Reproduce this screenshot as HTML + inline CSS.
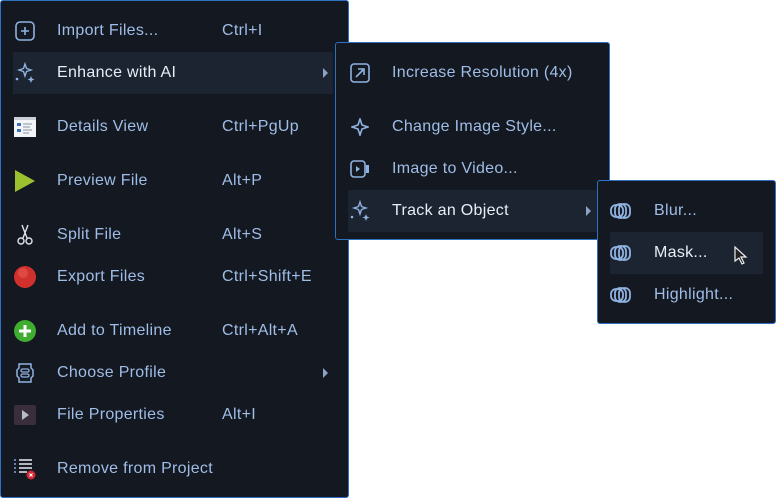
<!DOCTYPE html><html><head><style>
body{margin:0;width:776px;height:498px;background:#fff;position:relative;overflow:hidden;font-family:"Liberation Sans",sans-serif;font-size:16px;letter-spacing:0.3px;color:#9fbde6}
.m{position:absolute;background:#141821;border:1px solid #2f6fc4;border-radius:3px;box-sizing:border-box}
.r{position:absolute;left:0;right:0;height:42px;line-height:42px}
.t{position:absolute;white-space:nowrap}
.hl{background:#1c2432;color:#e8eef6}
.ic{position:absolute;top:50%;transform:translate(-50%,-50%)}
.arr{position:absolute;width:0;height:0;border-left:5px solid #8ca3c4;border-top:5px solid transparent;border-bottom:5px solid transparent;top:16px}
</style></head><body>
<div class="m" style="left:0;top:0;width:349px;height:498px">
 <div class="r" style="top:9px"><svg class="ic" style="left:24px" width="22" height="22" viewBox="0 0 22 22"><rect x="2" y="2" width="18" height="18" rx="4" fill="none" stroke="#8fb2e0" stroke-width="1.6"/><path d="M11 7v8M7 11h8" stroke="#8fb2e0" stroke-width="1.6"/></svg><span class="t" style="left:56px">Import Files...</span><span class="t" style="left:221px">Ctrl+I</span></div>
 <div class="r hl" style="top:51px;left:12px;right:15px"><svg class="ic" style="left:12px" width="22" height="22" viewBox="0 0 22 22"><path d="M11 2l1.5 4.5L17 8l-4.5 1.5L11 14l-1.5-4.5L5 8l4.5-1.5z" fill="none" stroke="#8fb2e0" stroke-width="1.4"/><path d="M17 14l1 2.5 2.5 1-2.5 1-1 2.5-1-2.5-2.5-1 2.5-1z" fill="#8fb2e0"/><circle cx="3" cy="17" r="1.3" fill="#8fb2e0"/></svg><span class="t" style="left:44px">Enhance with AI</span><span class="arr" style="left:310px"></span></div>
 <div class="r" style="top:105px"><svg class="ic" style="left:24px" width="22" height="20" viewBox="0 0 22 20"><rect x="0" y="0" width="22" height="20" fill="#f2f4f8"/><rect x="0" y="0" width="22" height="3" fill="#c9d0da"/><rect x="3" y="6" width="4" height="3" fill="#3d6fc0"/><rect x="3" y="12" width="4" height="3" fill="#3d6fc0"/><path d="M9 7h9M9 10h7M9 13h9M9 16h6" stroke="#8a94a3"/></svg><span class="t" style="left:56px">Details View</span><span class="t" style="left:221px">Ctrl+PgUp</span></div>
 <div class="r" style="top:159px"><svg class="ic" style="left:24px" width="22" height="22" viewBox="0 0 22 22"><path d="M1 0L21 11L1 22z" fill="#9ac22e"/></svg><span class="t" style="left:56px">Preview File</span><span class="t" style="left:221px">Alt+P</span></div>
 <div class="r" style="top:213px"><svg class="ic" style="left:24px" width="18" height="22" viewBox="0 0 18 22"><path d="M6 1l5 13M12 1L7 14" stroke="#dfe3ea" stroke-width="1.4"/><circle cx="5" cy="17" r="3" fill="none" stroke="#dfe3ea" stroke-width="1.4"/><circle cx="13" cy="17" r="3" fill="none" stroke="#dfe3ea" stroke-width="1.4"/></svg><span class="t" style="left:56px">Split File</span><span class="t" style="left:221px">Alt+S</span></div>
 <div class="r" style="top:255px"><svg class="ic" style="left:24px" width="22" height="22" viewBox="0 0 22 22"><circle cx="11" cy="11" r="11" fill="#d0312d"/><circle cx="9" cy="7" r="5" fill="#e85a52" opacity=".6"/></svg><span class="t" style="left:56px">Export Files</span><span class="t" style="left:221px">Ctrl+Shift+E</span></div>
 <div class="r" style="top:309px"><svg class="ic" style="left:24px" width="22" height="22" viewBox="0 0 22 22"><circle cx="11" cy="11" r="11" fill="#3fad2f"/><path d="M11 5v12M5 11h12" stroke="#fff" stroke-width="3"/></svg><span class="t" style="left:56px">Add to Timeline</span><span class="t" style="left:221px">Ctrl+Alt+A</span></div>
 <div class="r" style="top:351px"><svg class="ic" style="left:24px" width="20" height="22" viewBox="0 0 20 22"><path d="M4 2h12v4l2 2v6l-2 2v4H4v-4l-2-2V8l2-2z" fill="none" stroke="#8fb2e0" stroke-width="1.5"/><rect x="6" y="7" width="8" height="3" rx="1.5" fill="none" stroke="#8fb2e0" stroke-width="1.3"/><rect x="6" y="12" width="8" height="3" rx="1.5" fill="none" stroke="#8fb2e0" stroke-width="1.3"/></svg><span class="t" style="left:56px">Choose Profile</span><span class="arr" style="left:322px"></span></div>
 <div class="r" style="top:393px"><svg class="ic" style="left:24px" width="22" height="20" viewBox="0 0 22 20"><rect x="0" y="0" width="22" height="20" rx="2" fill="#3a2e3c"/><path d="M8 5l7 5-7 5z" fill="#b7bcc8"/></svg><span class="t" style="left:56px">File Properties</span><span class="t" style="left:221px">Alt+I</span></div>
 <div class="r" style="top:447px"><svg class="ic" style="left:24px" width="24" height="22" viewBox="0 0 24 22"><path d="M6 2h13M6 6h13M6 10h13M6 14h8" stroke="#e8ecf2" stroke-width="1.5"/><circle cx="2" cy="2" r="1" fill="#7fa6dc"/><circle cx="2" cy="6" r="1" fill="#7fa6dc"/><circle cx="2" cy="10" r="1" fill="#7fa6dc"/><circle cx="2" cy="14" r="1" fill="#7fa6dc"/><circle cx="18" cy="17" r="4.5" fill="#d02a36"/><path d="M16.5 15.5l3 3M19.5 15.5l-3 3" stroke="#fff" stroke-width="1"/></svg><span class="t" style="left:56px">Remove from Project</span></div>
</div>
<div class="m" style="left:335px;top:42px;width:275px;height:198px">
 <div class="r" style="top:9px"><svg class="ic" style="left:24px" width="20" height="20" viewBox="0 0 20 20"><rect x="1" y="1" width="18" height="18" rx="3" fill="none" stroke="#8fb2e0" stroke-width="1.6"/><path d="M6 14l8-8M8 6h6v6" fill="none" stroke="#8fb2e0" stroke-width="1.6"/></svg><span class="t" style="left:56px">Increase Resolution (4x)</span></div>
 <div class="r" style="top:63px"><svg class="ic" style="left:24px" width="18" height="18" viewBox="0 0 18 18"><path d="M9 1l2 6 6 2-6 2-2 6-2-6-6-2 6-2z" fill="none" stroke="#8fb2e0" stroke-width="1.6"/></svg><span class="t" style="left:56px">Change Image Style...</span></div>
 <div class="r" style="top:105px"><svg class="ic" style="left:24px" width="20" height="18" viewBox="0 0 20 18"><rect x="1" y="1" width="14" height="16" rx="3" fill="none" stroke="#8fb2e0" stroke-width="1.6"/><path d="M6 6l4 3-4 3z" fill="#8fb2e0"/><rect x="16" y="5" width="3" height="8" fill="#8fb2e0"/></svg><span class="t" style="left:56px">Image to Video...</span></div>
 <div class="r hl" style="top:147px;left:12px;right:12px"><svg class="ic" style="left:12px" width="22" height="22" viewBox="0 0 22 22"><path d="M11 2l1.5 4.5L17 8l-4.5 1.5L11 14l-1.5-4.5L5 8l4.5-1.5z" fill="none" stroke="#8fb2e0" stroke-width="1.4"/><path d="M17 14l1 2.5 2.5 1-2.5 1-1 2.5-1-2.5-2.5-1 2.5-1z" fill="#8fb2e0"/><circle cx="3" cy="17" r="1.3" fill="#8fb2e0"/></svg><span class="t" style="left:44px">Track an Object</span><span class="arr" style="left:238px"></span></div>
</div>
<div class="m" style="left:597px;top:180px;width:179px;height:144px">
 <div class="r" style="top:9px"><svg class="ic" style="left:23px" width="22" height="16" viewBox="0 0 22 16"><rect x="1" y="2" width="12" height="12" rx="5" fill="none" stroke="#8fb2e0" stroke-width="1.8"/><rect x="5" y="1" width="11" height="14" rx="5" fill="none" stroke="#8fb2e0" stroke-width="1.8"/><rect x="9" y="1" width="11" height="14" rx="5" fill="none" stroke="#8fb2e0" stroke-width="1.8"/></svg><span class="t" style="left:56px">Blur...</span></div>
 <div class="r hl" style="top:51px;left:12px;right:12px"><svg class="ic" style="left:11px" width="22" height="16" viewBox="0 0 22 16"><rect x="1" y="2" width="12" height="12" rx="5" fill="none" stroke="#8fb2e0" stroke-width="1.8"/><rect x="5" y="1" width="11" height="14" rx="5" fill="none" stroke="#8fb2e0" stroke-width="1.8"/><rect x="9" y="1" width="11" height="14" rx="5" fill="none" stroke="#8fb2e0" stroke-width="1.8"/></svg><span class="t" style="left:44px">Mask...</span><svg style="position:absolute;left:124px;top:14px" width="14" height="20" viewBox="0 0 14 20"><path d="M1 1v14l4-3 3 6 2-1-3-6h5z" fill="#222" stroke="#eee" stroke-width="1.2"/></svg></div>
 <div class="r" style="top:93px"><svg class="ic" style="left:23px" width="22" height="16" viewBox="0 0 22 16"><rect x="1" y="2" width="12" height="12" rx="5" fill="none" stroke="#8fb2e0" stroke-width="1.8"/><rect x="5" y="1" width="11" height="14" rx="5" fill="none" stroke="#8fb2e0" stroke-width="1.8"/><rect x="9" y="1" width="11" height="14" rx="5" fill="none" stroke="#8fb2e0" stroke-width="1.8"/></svg><span class="t" style="left:56px">Highlight...</span></div>
</div>
</body></html>
